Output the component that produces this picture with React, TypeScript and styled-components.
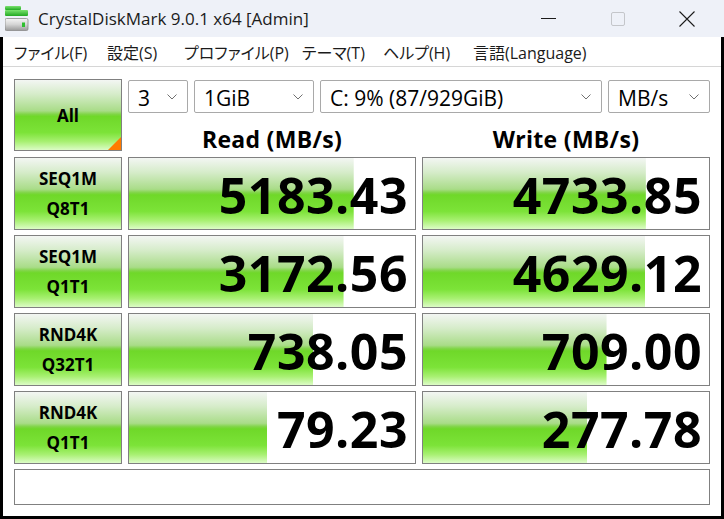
import styled, { createGlobalStyle } from 'styled-components';

const GlobalStyle = createGlobalStyle`
  html, body {
    margin: 0;
    padding: 0;
    background: #ffffff;
  }
  body {
    width: 724px;
    height: 519px;
    overflow: hidden;
    font-family: "Open Sans", "Noto Sans CJK JP", sans-serif;
    color: #000;
  }
`;

const greenGradient = `linear-gradient(180deg, #f3f6f3 0%, #d6ecca 20%, #a9dc88 44%, #7fd545 49%, #6fd829 52%, #7ce338 75%, #a8f072 88%, #dcfcc6 100%)`;

const Window = styled.div`
  width: 724px;
  height: 519px;
  display: flex;
  flex-direction: column;
`;

const TitleBar = styled.header`
  height: 37px;
  flex: none;
  background: #eef1f8;
  display: flex;
  align-items: center;
`;

const AppIcon = styled.svg`
  margin-left: 5px;
  flex: none;
`;

const TitleText = styled.span`
  margin-left: 9px;
  font-size: 17px;
  color: #1b1b1b;
  white-space: nowrap;
`;

const Controls = styled.div`
  margin-left: auto;
  height: 100%;
  display: flex;
  padding-right: 3px;
`;

const CtrlButton = styled.div`
  width: 69px;
  display: flex;
  align-items: center;
  justify-content: center;
`;

const MinLine = styled.div`
  width: 15px;
  height: 1px;
  background: #1b1b1b;
`;

const MaxBox = styled.div`
  width: 14px;
  height: 14px;
  box-sizing: border-box;
  border: 1px solid #c4c6ca;
  border-radius: 2px;
`;

const Frame = styled.div`
  flex: 1;
  min-height: 0;
  display: flex;
  flex-direction: column;
  background: #ffffff;
  border: 3px solid #000;
  border-top: none;
`;

const MenuBar = styled.nav`
  height: 29px;
  flex: none;
  display: flex;
  align-items: center;
  border-bottom: 1px solid #d6d6d6;
`;

const MenuItem = styled.span<{ $w: number }>`
  width: ${p => p.$w}px;
  flex: none;
  font-size: 16px;
  font-feature-settings: "palt";
  color: #1b1b1b;
  white-space: nowrap;
  &:first-child {
    margin-left: 11px;
  }
`;

const Body = styled.main`
  flex: 1;
  display: flex;
  flex-direction: column;
  gap: 6px;
  padding: 12px 11px 11px 11px;
`;

const TopRow = styled.div`
  height: 72px;
  display: flex;
  gap: 6px;
`;

const LabelButton = styled.div<{ $corner?: boolean }>`
  position: relative;
  width: 108px;
  flex: none;
  box-sizing: border-box;
  border: 1px solid #808080;
  background: ${greenGradient};
  display: flex;
  flex-direction: column;
  align-items: center;
  justify-content: center;
  font-size: 17px;
  font-weight: 700;
  line-height: 30px;
  padding-top: 1px;
  &::after {
    content: '';
    display: ${p => (p.$corner ? 'block' : 'none')};
    position: absolute;
    right: 0;
    bottom: 0;
    width: 0;
    height: 0;
    border-left: 13px solid transparent;
    border-bottom: 13px solid #ff7a00;
  }
`;

const TopRight = styled.div`
  flex: 1;
  display: flex;
  flex-direction: column;
`;

const SelectRow = styled.div`
  height: 34px;
  margin-top: 1px;
  display: flex;
  gap: 6px;
`;

const Select = styled.div<{ $w: number }>`
  width: ${p => p.$w}px;
  box-sizing: border-box;
  border: 1px solid #a9a9a9;
  border-radius: 2px;
  display: flex;
  align-items: center;
  padding: 3px 10px 0 9px;
  font-size: 21px;
  white-space: nowrap;
  svg {
    margin-left: auto;
    margin-top: -3px;
    flex: none;
  }
`;

const HeaderRow = styled.div`
  flex: 1;
  display: grid;
  grid-template-columns: 288px 288px;
  gap: 6px;
  align-items: center;
`;

const ColHeader = styled.div`
  text-align: center;
  font-size: 23px;
  font-weight: 700;
  letter-spacing: 0.3px;
  padding-top: 10px;
`;

const DataRow = styled.div`
  height: 72px;
  display: grid;
  grid-template-columns: 108px 288px 288px;
  gap: 6px;
`;

const ValueCell = styled.div`
  box-sizing: border-box;
  border: 1px solid #808080;
  background-color: #ffffff;
  background-image: ${greenGradient};
  background-repeat: no-repeat;
  display: flex;
  align-items: center;
  justify-content: flex-end;
  padding: 3px 7px 0 0;
  font-size: 50px;
  font-weight: 700;
  letter-spacing: 0.5px;
`;

const StatusBox = styled.div`
  height: 36px;
  box-sizing: border-box;
  border: 1px solid #808080;
`;

interface Result {
  name: string;
  sub: string;
  read: number;
  write: number;
}

const results: Result[] = [
  { name: 'SEQ1M', sub: 'Q8T1', read: 5183.43, write: 4733.85 },
  { name: 'SEQ1M', sub: 'Q1T1', read: 3172.56, write: 4629.12 },
  { name: 'RND4K', sub: 'Q32T1', read: 738.05, write: 709.0 },
  { name: 'RND4K', sub: 'Q1T1', read: 79.23, write: 277.78 },
];

const menus: [string, number][] = [
  ['ファイル(F)', 93],
  ['設定(S)', 77],
  ['プロファイル(P)', 118],
  ['テーマ(T)', 81],
  ['ヘルプ(H)', 90],
  ['言語(Language)', 140],
];

// CrystalDiskMark draws the bar on a log scale
const barWidth = (v: number) => `${Math.min(100, ((Math.log10(v) + 1) / 6) * 100)}% 100%`;

function Chevron() {
  return (
    <svg width="10" height="6" viewBox="0 0 10 6">
      <polyline points="0.5,0.5 5,5 9.5,0.5" fill="none" stroke="#707070" strokeWidth="1" />
    </svg>
  );
}

function Value({ v }: { v: number }) {
  return <ValueCell style={{ backgroundSize: barWidth(v) }}>{v.toFixed(2)}</ValueCell>;
}

function App() {
  return (
    <Window>
      <GlobalStyle />
      <TitleBar>
        <AppIcon width="24" height="26" viewBox="0 0 24 26">
          <defs>
            <linearGradient id="gTop" x1="0" y1="0" x2="0" y2="1">
              <stop offset="0" stopColor="#7be36f" />
              <stop offset="1" stopColor="#23a923" />
            </linearGradient>
            <linearGradient id="gBox" x1="0" y1="0" x2="0" y2="1">
              <stop offset="0" stopColor="#f6f6f6" />
              <stop offset="0.5" stopColor="#d4d4d4" />
              <stop offset="1" stopColor="#9a9a9a" />
            </linearGradient>
          </defs>
          <rect x="0" y="0" width="16" height="4" rx="1" fill="url(#gTop)" />
          <rect x="0" y="4" width="23" height="6" rx="1" fill="url(#gTop)" />
          <rect x="0" y="12.5" width="23" height="12" rx="1.5" fill="url(#gBox)" stroke="#8a8a8a" strokeWidth="0.8" />
          <rect x="17" y="16.5" width="3" height="4.5" fill="#2fbf2f" />
        </AppIcon>
        <TitleText>CrystalDiskMark 9.0.1 x64 [Admin]</TitleText>
        <Controls>
          <CtrlButton>
            <MinLine />
          </CtrlButton>
          <CtrlButton>
            <MaxBox />
          </CtrlButton>
          <CtrlButton>
            <svg width="16" height="16" viewBox="0 0 16 16">
              <path d="M0.5 0.5 L15.5 15.5 M15.5 0.5 L0.5 15.5" stroke="#1b1b1b" strokeWidth="1.1" />
            </svg>
          </CtrlButton>
        </Controls>
      </TitleBar>
      <Frame>
        <MenuBar>
          {menus.map(([label, w]) => (
            <MenuItem key={label} $w={w}>{label}</MenuItem>
          ))}
        </MenuBar>
        <Body>
          <TopRow>
            <LabelButton $corner>All</LabelButton>
            <TopRight>
              <SelectRow>
                <Select $w={60}>3<Chevron /></Select>
                <Select $w={120}>1GiB<Chevron /></Select>
                <Select $w={282}>C: 9% (87/929GiB)<Chevron /></Select>
                <Select $w={102}>MB/s<Chevron /></Select>
              </SelectRow>
              <HeaderRow>
                <ColHeader>Read (MB/s)</ColHeader>
                <ColHeader>Write (MB/s)</ColHeader>
              </HeaderRow>
            </TopRight>
          </TopRow>
          {results.map(r => (
            <DataRow key={r.name + r.sub}>
              <LabelButton>
                <span>{r.name}</span>
                <span>{r.sub}</span>
              </LabelButton>
              <Value v={r.read} />
              <Value v={r.write} />
            </DataRow>
          ))}
          <StatusBox />
        </Body>
      </Frame>
    </Window>
  );
}

export default App;
